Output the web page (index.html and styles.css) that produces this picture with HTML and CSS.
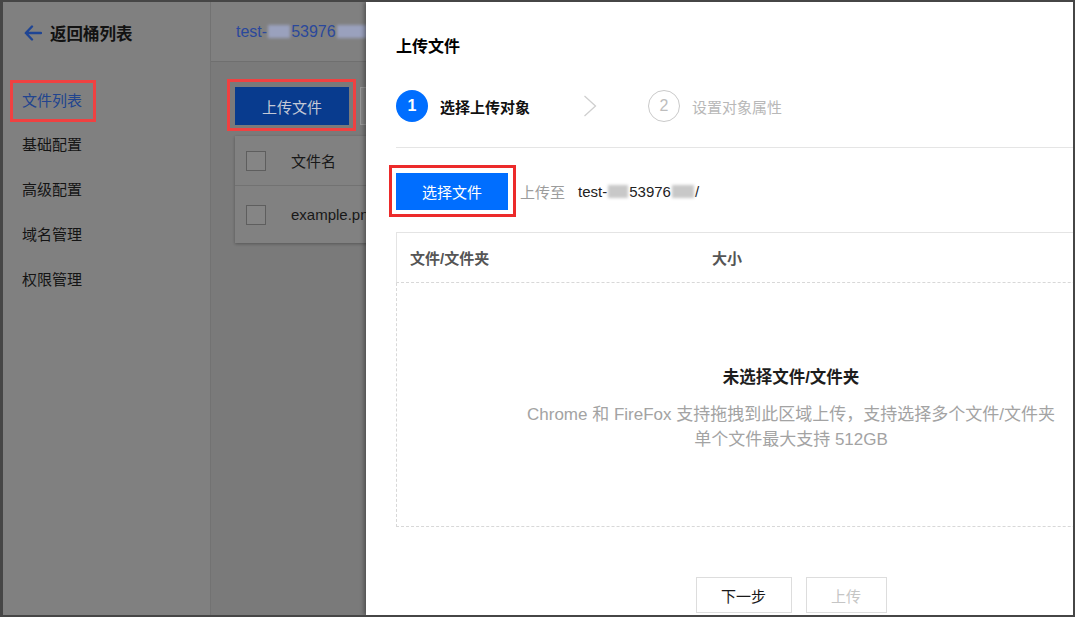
FILE: index.html
```html
<!DOCTYPE html>
<html lang="zh-CN">
<head>
<meta charset="utf-8">
<title>上传文件</title>
<link rel="stylesheet" href="styles.css">
</head>
<body>
<div class="frame">
  <aside class="sidebar">
    <div class="back">
      <svg class="back-icon" width="18" height="16" viewBox="0 0 18 16"><path d="M8 1.5 1.8 8 8 14.5M2 8h15" fill="none" stroke="#1f4594" stroke-width="2.4" stroke-linecap="round" stroke-linejoin="round"/></svg>
      <span>返回桶列表</span>
    </div>
    <ul class="nav">
      <li class="nav-item active"><span class="hl hl-nav">文件列表</span></li>
      <li class="nav-item">基础配置</li>
      <li class="nav-item">高级配置</li>
      <li class="nav-item">域名管理</li>
      <li class="nav-item">权限管理</li>
    </ul>
  </aside>
  <main class="main">
    <header class="main-header">
      <span class="bucket">test-<i class="blur b1"></i>53976<i class="blur b2"></i></span>
    </header>
    <div class="toolbar">
      <span class="hl hl-upload"><button class="btn-upload">上传文件</button></span>
      <button class="btn-ghost" aria-label="新建文件夹"></button>
    </div>
    <div class="card">
      <div class="card-row head"><span class="chk"></span><span>文件名</span></div>
      <div class="card-row"><span class="chk"></span><span class="latin">example.png</span></div>
    </div>
  </main>
  <section class="drawer">
    <h1 class="title">上传文件</h1>
    <div class="steps">
      <span class="step-num cur">1</span>
      <span class="step-label cur">选择上传对象</span>
      <svg class="chev" width="14" height="22" viewBox="0 0 14 22"><path d="M1.5 1 12.5 11 1.5 21" fill="none" stroke="#cfcfcf" stroke-width="1.3"/></svg>
      <span class="step-num next">2</span>
      <span class="step-label next">设置对象属性</span>
    </div>
    <div class="select-row">
      <span class="hl hl-select"><button class="btn-primary">选择文件</button></span>
      <span class="dest-label">上传至</span>
      <span class="dest latin">test-<i class="blur b3"></i>53976<i class="blur b4"></i>/</span>
    </div>
    <div class="files">
      <div class="files-head">
        <span class="col-name">文件/文件夹</span>
        <span class="col-size">大小</span>
      </div>
      <div class="files-body">
        <p class="empty-title">未选择文件/文件夹</p>
        <p class="empty-desc">Chrome 和 FireFox 支持拖拽到此区域上传，支持选择多个文件/文件夹<br>单个文件最大支持 512GB</p>
      </div>
    </div>
    <div class="footer">
      <button class="btn-default">下一步</button>
      <button class="btn-default disabled">上传</button>
    </div>
  </section>
</div>
</body>
</html>
```

FILE: styles.css
```css
* { box-sizing: border-box; }
html, body { margin: 0; padding: 0; background: #fff; }
body {
  font-family: "Liberation Sans", "Noto Sans CJK SC", sans-serif;
  font-size: 15px;
  color: #000;
}
ul, p, h1 { margin: 0; padding: 0; }
button { font-family: inherit; cursor: pointer; }

.frame {
  position: relative;
  width: 1075px;
  height: 617px;
  border: 2px solid #464646;
  border-left-width: 3px;
  display: flex;
  overflow: hidden;
  background: #7a7a7a;
}

/* sidebar (dimmed by the mask) */
.sidebar {
  width: 208px;
  flex: none;
  background: #808080;
  border-right: 1px solid #727272;
  padding-left: 19px;
}
.back {
  display: flex;
  align-items: center;
  gap: 8px;
  height: 24px;
  margin-top: 19px;
  font-size: 16.5px;
  font-weight: 700;
  color: #121212;
}
.back-icon { flex: none; margin-left: 2px; }
.nav { list-style: none; margin-top: 32px; }
.nav-item {
  height: 45px;
  line-height: 45px;
  font-size: 15px;
  color: #141414;
}
.nav-item.active { color: #21448f; }

.hl { position: relative; display: inline-block; }
.hl::after {
  content: "";
  position: absolute;
  border: 3px solid #f04141;
  pointer-events: none;
}
.hl-nav { line-height: 20px; vertical-align: middle; }
.hl-nav::after { top: -11px; bottom: -11px; left: -12px; right: -14px; }

/* main (dimmed) */
.main { flex: 1; min-width: 0; background: #7a7a7a; }
.main-header {
  height: 60px;
  background: #808080;
  border-bottom: 1px solid #6f6f6f;
  padding: 20px 0 0 25px;
  white-space: nowrap;
}
.bucket { font-size: 16px; color: #2a489c; line-height: 20px; }
.blur {
  display: inline-block;
  width: 18px;
  height: 13px;
  background: #9aa1bd;
  filter: blur(1.6px);
  vertical-align: -1px;
  margin: 0 1px;
}
.b1 { width: 22px; }
.b2 { width: 30px; }

.toolbar {
  display: flex;
  gap: 11px;
  padding: 25px 0 0 24px;
  white-space: nowrap;
}
.hl-upload::after { top: -8px; bottom: -6px; left: -8px; right: -7px; }
.btn-upload {
  display: block;
  width: 114px;
  height: 38px;
  border: 0;
  background: #083b8e;
  color: #c3c9d6;
  font-size: 15px;
}
.btn-ghost {
  height: 38px;
  width: 80px;
  flex: none;
  border: 1px solid #999;
  background: #838383;
}
.card {
  margin: 11px 0 0 24px;
  width: 400px;
  background: #818181;
  box-shadow: 0 1px 3px rgba(0, 0, 0, .3);
}
.card-row {
  display: flex;
  align-items: center;
  gap: 25px;
  height: 57px;
  padding-left: 11px;
  color: #181818;
  font-size: 15px;
  white-space: nowrap;
}
.card-row.head { height: 50px; border-bottom: 1px solid #727272; }
.chk {
  width: 20px;
  height: 20px;
  flex: none;
  border: 1px solid #5e5e5e;
  background: #858585;
}
.latin { font-family: "Liberation Sans", sans-serif; }

/* drawer */
.drawer {
  position: absolute;
  top: 0;
  bottom: 0;
  left: 363px;
  width: 850px;
  background: #fff;
  box-shadow: -2px 0 4px rgba(0, 0, 0, .35);
  padding: 34px 30px 0;
}
.title {
  font-size: 16px;
  font-weight: 700;
  line-height: 22px;
  color: #000;
}
.steps {
  display: flex;
  align-items: center;
  height: 32px;
  margin-top: 32px;
}
.step-num {
  width: 32px;
  height: 32px;
  flex: none;
  border-radius: 50%;
  display: flex;
  align-items: center;
  justify-content: center;
  font-size: 16px;
}
.step-num.cur { background: #006eff; color: #fff; font-weight: 700; }
.step-num.next { border: 1.5px solid #cacaca; color: #bdbdbd; margin-left: 51px; }
.step-label { margin-left: 12px; font-size: 15px; }
.step-label.cur { font-weight: 700; color: #111; }
.step-label.next { color: #b8b8b8; }
.chev { margin-left: 53px; flex: none; }

.select-row {
  display: flex;
  align-items: center;
  margin-top: 25px;
  border-top: 1px solid #e5e5e5;
  padding-top: 25px;
  white-space: nowrap;
}
.hl-select::after { top: -8px; bottom: -7px; left: -7px; right: -8px; border-color: #ec2a2a; }
.btn-primary {
  display: block;
  width: 112px;
  height: 37px;
  border: 0;
  background: #006eff;
  color: #fff;
  font-size: 15px;
}
.dest-label { margin-left: 12px; color: #9c9c9c; font-size: 15px; }
.dest { margin-left: 13px; color: #222; font-size: 15px; }
.b3 { width: 20px; background: #c8c8c8; }
.b4 { width: 22px; background: #c8c8c8; }

.files { margin-top: 22px; }
.files-head {
  display: flex;
  align-items: center;
  height: 51px;
  border: 1px solid #e4e4e4;
  border-bottom: 1px dashed #d8d8d8;
  padding-left: 13px;
  font-size: 15px;
  font-weight: 700;
  color: #555;
}
.col-name { width: 302px; }
.files-body {
  height: 244px;
  border: 1px dashed #d8d8d8;
  border-top: 0;
  text-align: center;
  padding-top: 83px;
}
.empty-title {
  font-size: 16.5px;
  font-weight: 700;
  line-height: 22px;
  color: #1d1d1d;
}
.empty-desc {
  margin-top: 14px;
  font-size: 17px;
  line-height: 25px;
  color: #a3a3a3;
}
.footer {
  display: flex;
  justify-content: center;
  gap: 14px;
  margin-top: 50px;
}
.btn-default {
  height: 36px;
  width: 96px;
  border: 1px solid #dddddd;
  background: #fff;
  color: #1a1a1a;
  font-size: 15px;
}
.btn-default.disabled { width: 81px; color: #c5c5c5; cursor: default; }
```
